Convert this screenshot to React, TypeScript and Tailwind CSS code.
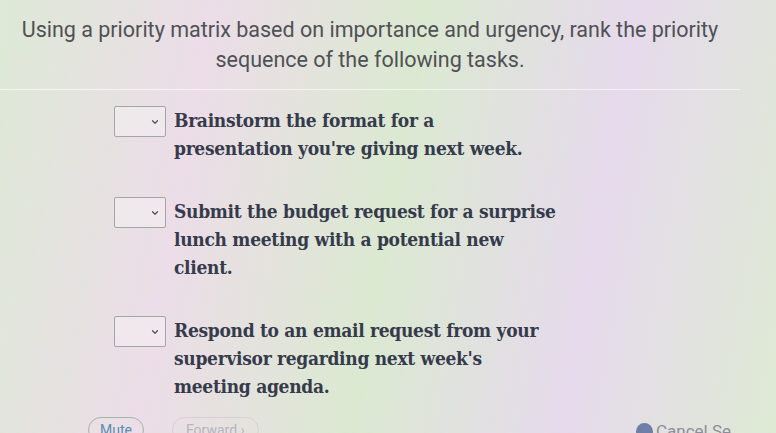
import { ChevronDown } from "lucide-react";

interface Task {
  id: string;
  lines: string[];
}

// line breaks follow the screenshot
const TASKS: Task[] = [
  { id: "brainstorm", lines: ["Brainstorm the format for a", "presentation you're giving next week."] },
  {
    id: "budget",
    lines: ["Submit the budget request for a surprise", "lunch meeting with a potential new", "client."],
  },
  {
    id: "email",
    lines: ["Respond to an email request from your", "supervisor regarding next week's", "meeting agenda."],
  },
];

function RankSelect() {
  return (
    <div className="flex h-[31px] w-[52px] shrink-0 items-center justify-end rounded-[2px] border border-[#a3a6a6] bg-white/30 pr-[5px]">
      <ChevronDown className="h-[10px] w-[10px] text-[#555]" strokeWidth={3} />
    </div>
  );
}

function TaskRow({ task }: { task: Task }) {
  return (
    <li className="flex items-start gap-[8px]">
      <RankSelect />
      <p className="text-[19px] leading-[28px] font-bold tracking-[-0.3px] text-[#363b4c] [font-family:'DejaVu_Serif_Condensed','DejaVu_Serif',serif]">
        {task.lines.map((line) => (
          <span key={line} className="block whitespace-nowrap">
            {line}
          </span>
        ))}
      </p>
    </li>
  );
}

export default function App() {
  return (
    <div className="relative h-[433px] w-[776px] overflow-hidden bg-[linear-gradient(100deg,#dde9d6,#ecdde8_25%,#dbe9d1_50%,#e6daec_75%,#deead4)] [font-family:Roboto,'Liberation_Sans',sans-serif]">
      <header className="w-[740px] border-b border-white/60 pt-[15px] pb-[14px] text-center text-[21.5px] leading-[30px] text-[#4f5155]">
        Using a priority matrix based on importance and urgency, rank the priority sequence of the following tasks.
      </header>

      <ol className="ml-[114px] mt-[16px] flex flex-col gap-[35px]">
        {TASKS.map((task) => (
          <TaskRow key={task.id} task={task} />
        ))}
      </ol>

      <footer className="absolute top-[417px] left-0 flex w-full items-start">
        <button className="ml-[88px] h-[26px] rounded-full border border-[#9fb7a6] px-[11px] text-[14px] leading-[22px] text-[#5a8cb0]">
          Mute
        </button>
        <button className="ml-[28px] h-[26px] rounded-full border border-[#d8cdd4] px-[13px] text-[14px] leading-[22px] text-[#b7b4be]">
          Forward ›
        </button>
        <div className="ml-auto flex w-[140px] items-center gap-[3px] pt-[2px]">
          <span className="h-[17px] w-[17px] rounded-full bg-[#6d7fa6]" />
          <span className="text-[17px] text-[#8c8f9a]">Cancel Se</span>
        </div>
      </footer>
    </div>
  );
}
